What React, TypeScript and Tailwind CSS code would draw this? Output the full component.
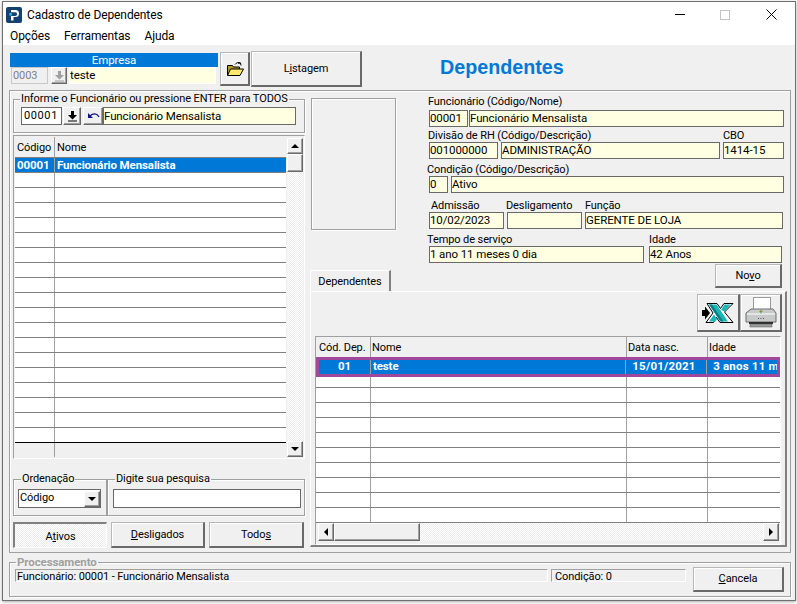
const raised =
	"border-t border-l border-r-2 border-b-2 border-t-[#b8b8b8] border-l-[#b8b8b8] border-r-[#696969] border-b-[#696969] shadow-[inset_1px_1px_0_#fff] bg-[#f0f0f0]";
const smallRaised =
	"border border-t-white border-l-white border-r-[#696969] border-b-[#696969] shadow-[inset_-1px_-1px_0_#a0a0a0] bg-[#f0f0f0] flex items-center justify-center";
const dither = "bg-[repeating-conic-gradient(#fff_0_25%,#ececec_0_50%)] bg-[length:2px_2px]";
const groove = "border border-[#a0a0a0] shadow-[1px_1px_0_#fff,inset_1px_1px_0_#fff]";

function Field({ value, className }: { value?: string; className: string }) {
	return (
		<div className={`h-[17px] shrink-0 border border-[#696969] bg-[#ffffe1] text-[11.5px] leading-[15px] tracking-[-0.1px] whitespace-nowrap overflow-hidden ${className}`}>
			{value}
		</div>
	);
}

function Tri({ dir }: { dir: "up" | "down" | "left" | "right" }) {
	const pts = {
		up: "0,4 8,4 4,0",
		down: "0,0 8,0 4,4",
		left: "4,0 4,8 0,4",
		right: "0,0 0,8 4,4",
	}[dir];
	const horizontal = dir === "left" || dir === "right";
	return (
		<svg width={horizontal ? 4 : 8} height={horizontal ? 8 : 4} viewBox={horizontal ? "0 0 4 8" : "0 0 8 4"}>
			<polygon points={pts} fill="#000" />
		</svg>
	);
}

function DownArrow({ color = "#000" }: { color?: string }) {
	return (
		<svg width="11" height="12" viewBox="0 0 11 12">
			<path d="M4 1h3v4h3l-4.500 4.500L1 5h3zM1 10.500h9v1H1z" fill={color} />
		</svg>
	);
}

function Logo() {
	return (
		<svg width="16" height="16" viewBox="0 0 16 16">
			<rect width="16" height="16" rx="2" fill="#14416f" />
			<path d="M5 3h4.500a3.500 3.500 0 0 1 0 7H7.500v3.500H5V9h4.200a1.700 1.700 0 0 0 0-3.800H5z" fill="#fff" />
			<circle cx="4.500" cy="7.300" r="1.500" fill="#29b6e8" />
		</svg>
	);
}

function FolderIcon() {
	return (
		<svg width="18" height="16" viewBox="0 0 18 16">
			<path d="M1.500 4.500h5l1 1.500h6v8h-12z" fill="#b59a2a" stroke="#000" strokeWidth="1" />
			<path d="M1.500 14.500l3-6.500h13l-3.500 6.500z" fill="#ffe86b" stroke="#000" strokeWidth="1" />
			<path d="M9 3.500c1.500-2 3.500-2.500 5.500-1.500M14.500 2l.5 2.500M14.500 2l-2.500.3" fill="none" stroke="#000" strokeWidth="1" />
		</svg>
	);
}

function ExcelIcon() {
	return (
		<svg width="32" height="20" viewBox="0 0 32 20">
			<path d="M0 7h3V3.500L8 10l-5 6.500V13H0z" fill="#000" />
			<path d="M5 .5h10l3.500 5 3.500-5h9l-8.500 8.500L31 19.500H18l-3.500-5-3 5H4l7-9.500z" fill="#fff" stroke="#000" strokeWidth="1" />
			<path d="M7 1.500h7.500l11.500 17h-7.500zM7 18.500l5-7 3 4.500-2 2.500zM19 7l3.500-5.500h6L22.500 8.500z" fill="#19b8b8" />
			<path d="M7 1.500h3l11.500 17h-3z" fill="#0d7f86" />
		</svg>
	);
}

function PrinterIcon() {
	return (
		<svg width="32" height="31" viewBox="0 0 32 31">
			<rect x="8.500" y="0.500" width="17" height="16" fill="#fff" stroke="#9a9a9a" />
			<path d="M6 12h22l3 4v9H1v-9z" fill="#c8caca" stroke="#6d6d6d" />
			<rect x="2" y="16" width="28" height="2" fill="#e4e5e5" />
			<path d="M16 13v3.500M14.500 14.500h3" stroke="#3aa53a" strokeWidth="1" />
			<rect x="15.500" y="14" width="1.500" height="1" fill="#e0702a" />
			<path d="M13 21.500h1M15.500 21.500h1M18 21.500h1" stroke="#555" />
			<rect x="4" y="25" width="24" height="2" fill="#2b2b2b" />
			<rect x="5" y="27" width="22" height="3" fill="#9a9b9b" stroke="#555" strokeWidth="0.500" />
		</svg>
	);
}

function LeftGrid() {
	const rows = Array.from({ length: 19 }, (_, i) => i);
	return (
		<div className="mt-[2px] flex h-[324px] border border-t-[#a0a0a0] border-l-[#a0a0a0] border-r-white border-b-white p-px">
			<div className="flex w-[272px] flex-col">
				<div className="flex h-[21px] border-b border-[#808080]">
					<div className="w-[40px] border-r border-[#a0a0a0] pl-[2px] leading-[22px]">Código</div>
					<div className="pl-[2px] leading-[22px]">Nome</div>
				</div>
				{rows.map((i) => (
					<div
						key={i}
						className={`flex h-[15px] shrink-0 border-b ${i === 18 ? "border-black" : "border-[#808080]"} ${i === 0 ? "bg-[#0078d7] text-[11.5px] font-bold text-white" : "bg-white"}`}
					>
						<div className="w-[40px] border-r border-[#a0a0a0] pl-[2px] leading-[14px]">{i === 0 ? "00001" : ""}</div>
						<div className="pl-[2px] leading-[14px]">{i === 0 ? "Funcionário Mensalista" : ""}</div>
					</div>
				))}
				<div className="flex-1">
					<div className="h-full w-[40px] border-r border-[#a0a0a0]" />
				</div>
			</div>
			<div className="ml-px flex w-[16px] flex-col pt-px">
				<div className={`h-[16px] ${smallRaised}`}>
					<Tri dir="up" />
				</div>
				<div className={`h-[18px] ${smallRaised}`} />
				<div className={`flex-1 ${dither}`} />
				<div className={`h-[16px] ${smallRaised}`}>
					<Tri dir="down" />
				</div>
			</div>
		</div>
	);
}

function RightGrid() {
	const rows = Array.from({ length: 10 }, (_, i) => i);
	return (
		<div className="ml-[4px] mt-[4px] flex h-[209px] w-[466px] flex-col border border-t-[#a0a0a0] border-l-[#a0a0a0] border-r-white border-b-white">
			<div className="flex h-[20px] shrink-0 whitespace-nowrap leading-[21px]">
				<div className="w-[55px] border-r border-[#a0a0a0] pl-[3px]">Cód. Dep.</div>
				<div className="w-[256px] border-r border-[#a0a0a0] pl-px">Nome</div>
				<div className="w-[81px] border-r border-[#a0a0a0] pl-px">Data nasc.</div>
				<div className="pl-px">Idade</div>
			</div>
			<div className="flex h-[20px] shrink-0 border-[3px] border-[#a0489c] bg-[#0078d7] text-[11.5px] font-bold leading-[13px] text-white">
				<div className="w-[52px] border-r border-[#a0a0a0] text-center">01</div>
				<div className="w-[256px] border-r border-[#a0a0a0] pl-[2px]">teste</div>
				<div className="w-[81px] border-r border-[#a0a0a0] pl-[6px] tracking-[0.2px]">15/01/2021</div>
				<div className="w-[70px] overflow-hidden whitespace-nowrap pl-[6px] tracking-[0.2px]">3 anos 11 m</div>
			</div>
			{rows.map((i) => (
				<div key={i} className={`flex shrink-0 border-b border-[#808080] bg-white ${i === 0 ? "h-[11px]" : "h-[15px]"}`}>
					<div className="w-[55px] border-r border-[#a0a0a0]" />
					<div className="w-[256px] border-r border-[#a0a0a0]" />
					<div className="w-[81px] border-r border-[#a0a0a0]" />
				</div>
			))}
			<div className="flex h-[18px] shrink-0 pl-[2px] pr-px">
				<div className={`w-[16px] ${smallRaised}`}>
					<Tri dir="left" />
				</div>
				<div className={`w-[86px] ${smallRaised}`} />
				<div className={`flex-1 ${dither}`} />
				<div className={`w-[16px] ${smallRaised}`}>
					<Tri dir="right" />
				</div>
			</div>
		</div>
	);
}

export default function App() {
	return (
		<div className="h-[604px] w-[797px] overflow-hidden bg-white pt-px font-['Roboto',sans-serif] text-[11px] tracking-[-0.1px] text-black">
			<div className="ml-[2px] flex h-[600px] w-[794px] flex-col border border-[#707070] shadow-[0_1px_3px_#aaa]">
				<div className="flex h-[25px] shrink-0 items-center bg-white pl-[3px]">
					<Logo />
					<span className="ml-[5px] text-[12px]">Cadastro de Dependentes</span>
					<div className="ml-auto flex items-center">
						<div className="h-px w-[10px] bg-black" />
						<div className="ml-[35px] h-[10px] w-[10px] border border-[#c4c4c4]" />
						<svg className="ml-[36px] mr-[18px]" width="11" height="11" viewBox="0 0 11 11">
							<path d="M.5.500l10 10M10.500.500l-10 10" stroke="#000" />
						</svg>
					</div>
				</div>
				<div className="flex h-[18px] shrink-0 items-center gap-[14px] bg-white pl-[7px] text-[12px]">
					<span>Opções</span>
					<span>Ferramentas</span>
					<span>Ajuda</span>
				</div>
				<div className="flex flex-1 flex-col bg-[#f0f0f0] pl-[6px] pt-[6px]">
					<div className="ml-[1px] flex h-[36px] items-start">
						<div className="mt-[2px] w-[208px]">
							<div className="h-[14px] bg-[#0078d7] text-center text-[11.5px] leading-[14px] text-white">Empresa</div>
							<div className="flex items-center">
								<div className="ml-px h-[17px] w-[37px] border border-[#c8c8c8] bg-[#f0f0f0] pl-px leading-[15px] text-[#808080]">0003</div>
								<div className={`ml-[3px] h-[17px] w-[16px] ${smallRaised}`}>
									<DownArrow color="#a0a0a0" />
								</div>
								<Field value="teste" className="ml-[2px] w-[147px] border-white" />
							</div>
						</div>
						<div className={`ml-[2px] mt-px flex h-[34px] w-[30px] items-center justify-center ${raised}`}>
							<FolderIcon />
						</div>
						<div className={`ml-[1px] flex h-[36px] w-[111px] items-center justify-center pt-px ${raised}`}>
							<span>
								L<u>i</u>stagem
							</span>
						</div>
						<div className="ml-[78px] mt-[3px] font-['Liberation_Sans',sans-serif] text-[19.7px] font-bold leading-[26px] tracking-normal text-[#0078d7]">Dependentes</div>
					</div>
					<div className="mt-[3px] flex h-[463px] w-[782px] border border-[#a0a0a0] shadow-[inset_1px_1px_0_#fff]">
						<div className="ml-[3px] flex w-[292px] shrink-0 flex-col pt-px">
							<fieldset className={`h-[41px] ${groove}`}>
								<legend className="ml-[6px] whitespace-nowrap px-px leading-[14px]">Informe o Funcionário ou pressione ENTER para TODOS</legend>
								<div className="ml-[7px] mt-px flex items-center">
									<div className="h-[18px] w-[41px] border border-[#696969] bg-white pl-[2px] leading-[16px] tracking-[0.6px]">00001</div>
									<div className={`ml-px h-[18px] w-[18px] ${smallRaised}`}>
										<DownArrow />
									</div>
									<div className={`ml-[2px] h-[18px] w-[20px] ${smallRaised}`}>
										<svg width="13" height="9" viewBox="0 0 13 9">
											<path d="M3 4c3-3 7-3 9 1" fill="none" stroke="#14148c" strokeWidth="1.300" />
											<path d="M1 1v5h5z" fill="#14148c" />
										</svg>
									</div>
									<Field value="Funcionário Mensalista" className="h-[18px] w-[193px] leading-[16px]" />
								</div>
							</fieldset>
							<LeftGrid />
							<div className="mt-[13px] flex h-[44px]">
								<fieldset className={`w-[94px] ${groove}`}>
									<legend className="ml-[7px] px-px leading-[14px]">Ordenação</legend>
									<div className="ml-[4px] mt-[3px] flex h-[19px] w-[83px] items-center border border-[#696969] bg-white pl-px">
										<span className="flex-1">Código</span>
										<div className={`h-[16px] w-[16px] ${smallRaised}`}>
											<Tri dir="down" />
										</div>
									</div>
								</fieldset>
								<fieldset className={`w-[198px] ${groove}`}>
									<legend className="ml-[7px] px-px leading-[14px]">Digite sua pesquisa</legend>
									<div className="ml-[5px] mt-[3px] h-[19px] w-[188px] border border-[#696969] bg-white" />
								</fieldset>
							</div>
							<div className="mt-[6px] flex h-[26px] gap-[4px]">
								<div className={`flex w-[94px] items-center justify-center border border-t-2 border-l-2 border-[#808080] border-r-white border-b-white pt-[3px] ${dither}`}>
									<span>
										A<u>t</u>ivos
									</span>
								</div>
								<div className={`flex w-[94px] items-center justify-center pt-[2px] ${raised}`}>
									<span>
										<u>D</u>esligados
									</span>
								</div>
								<div className={`flex w-[95px] items-center justify-center pt-[2px] ${raised}`}>
									<span>
										Todo<u>s</u>
									</span>
								</div>
							</div>
						</div>
						<div className="ml-[5px] flex w-[477px] shrink-0 flex-col">
							<div className="flex h-[172px]">
								<div className={`ml-px mt-[7px] h-[132px] w-[85px] ${groove}`} />
								<div className="ml-[31px] flex w-[356px] flex-col pt-[3px]">
									<div className="ml-[1px] h-[16px] leading-[16px]">Funcionário (Código/Nome)</div>
									<div className="ml-[2px] flex gap-[1px]">
										<Field value="00001" className="w-[39px]" />
										<Field value="Funcionário Mensalista" className="w-[315px]" />
									</div>
									<div className="ml-[1px] flex h-[15px] leading-[17px]">
										<span className="w-[295px]">Divisão de RH (Código/Descrição)</span>
										<span>CBO</span>
									</div>
									<div className="ml-[2px] flex">
										<Field value="001000000" className="w-[69px]" />
										<Field value="ADMINISTRAÇÃO" className="ml-[3px] w-[219px]" />
										<Field value="1414-15" className="ml-[3px] w-[61px]" />
									</div>
									<div className="h-[17px] leading-[22px]">Condição (Código/Descrição)</div>
									<div className="ml-[2px] flex">
										<Field value="0" className="w-[19px]" />
										<Field value="Ativo" className="ml-[3px] w-[333px]" />
									</div>
									<div className="ml-[4px] flex h-[19px] leading-[26px]">
										<span className="w-[75px]">Admissão</span>
										<span className="w-[79px]">Desligamento</span>
										<span>Função</span>
									</div>
									<div className="ml-[2px] flex">
										<Field value="10/02/2023" className="w-[75px]" />
										<Field className="ml-[3px] w-[75px]" />
										<Field value="GERENTE DE LOJA" className="ml-[3px] w-[198px]" />
									</div>
									<div className="flex h-[17px] leading-[22px]">
										<span className="w-[222px]">Tempo de serviço</span>
										<span>Idade</span>
									</div>
									<div className="ml-[2px] flex">
										<Field value="1 ano 11 meses 0 dia" className="w-[215px]" />
										<Field value="42 Anos" className="ml-[5px] w-[133px]" />
									</div>
								</div>
							</div>
							<div className="flex h-[28px] items-start">
								<div className="mt-[7px] flex h-[21px] w-[81px] items-center justify-center border-t border-l border-r-2 border-white border-r-[#808080] bg-[#f0f0f0] pt-[3px]">
									Dependentes
								</div>
								<div className={`ml-[324px] mt-px flex h-[24px] w-[67px] items-center justify-center pt-px ${raised}`}>
									<span>
										No<u>v</u>o
									</span>
								</div>
							</div>
							<div className="h-[256px] w-[477px] border-t border-l border-r-2 border-b-2 border-white border-r-[#808080] border-b-[#808080] pt-[2px]">
								<div className="flex h-[38px] justify-end pr-[3px]">
									<div className={`flex h-[38px] w-[43px] items-center justify-center ${raised}`}>
										<ExcelIcon />
									</div>
									<div className={`flex h-[38px] w-[42px] items-center justify-center ${raised}`}>
										<PrinterIcon />
									</div>
								</div>
								<RightGrid />
							</div>
						</div>
					</div>
					<fieldset className={`mt-[2px] h-[42px] w-[782px] ${groove}`}>
						<legend className="ml-[6px] px-px text-[11.5px] font-bold leading-[14px] text-[#a0a0a0]">Processamento</legend>
						<div className="ml-[5px] flex items-start">
							<div className="h-[13px] w-[533px] border-t border-l border-[#a0a0a0] border-b border-b-white border-r border-r-white pl-px leading-[13px]">Funcionário: 00001 - Funcionário Mensalista</div>
							<div className="ml-[3px] h-[13px] w-[135px] border-t border-l border-[#a0a0a0] border-b border-b-white border-r border-r-white pl-[3px] leading-[13px]">Condição: 0</div>
							<div className={`-mt-[2px] ml-[7px] flex h-[25px] w-[91px] items-center justify-center pt-px ${raised}`}>
								<span>
									<u>C</u>ancela
								</span>
							</div>
						</div>
					</fieldset>
				</div>
			</div>
		</div>
	);
}
